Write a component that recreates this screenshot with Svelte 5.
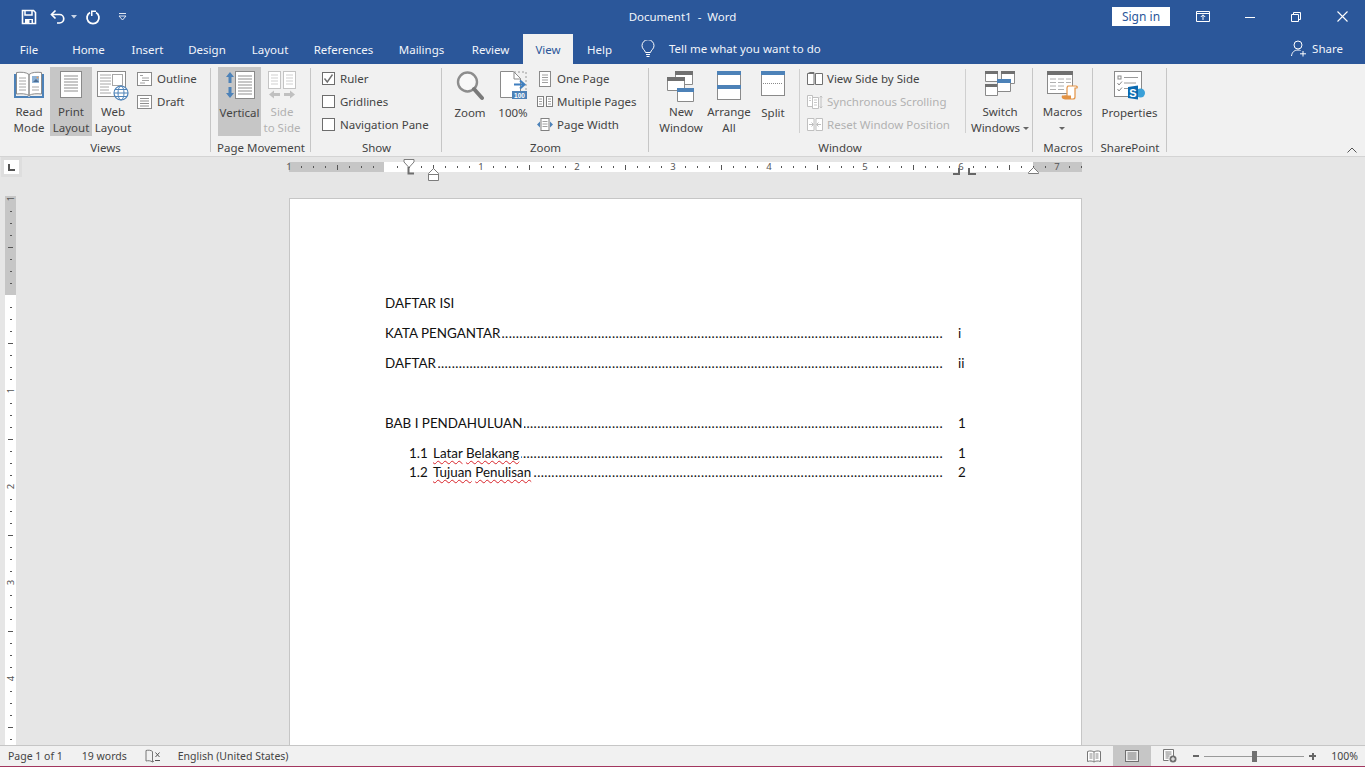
<script>
  const tabs = ["File", "Home", "Insert", "Design", "Layout", "References", "Mailings", "Review", "View", "Help"];

  // horizontal ruler: zero is at 96px from the ruler's left edge, 12px per tick
  const hTicks = [];
  for (let k = -7; k <= 58; k++) {
    if (k % 8 === 0) continue;
    hTicks.push({ x: 96 + k * 12, long: k % 4 === 0 });
  }
  const hNums = [-1, 1, 2, 3, 4, 5, 6, 7].map((n) => ({ x: 96 + n * 96, label: Math.abs(n) }));

  const vTicks = [];
  for (let k = -7; k <= 38; k++) {
    if (k % 8 === 0) continue;
    vTicks.push({ y: 99 + k * 12, long: k % 4 === 0 });
  }
  const vNums = [-1, 1, 2, 3, 4].map((n) => ({ y: 99 + n * 96, label: Math.abs(n) }));

  const dots = ".".repeat(260);
</script>

<div class="word">
  <header class="titlebar">
    <div class="qat">
      <svg width="16" height="16" viewBox="0 0 16 16" class="save"><path d="M1.5 1.5h11l2 2v11h-13z" fill="none" stroke="#fff" stroke-width="1.6"/><path d="M4 2v4h7V2" fill="none" stroke="#fff" stroke-width="1.5"/><path d="M4 15v-5h8v5" fill="#fff"/><rect x="8.5" y="11" width="2" height="3" fill="#2b579a"/></svg>
      <svg width="16" height="16" viewBox="0 0 16 16" class="undo"><path d="M5.5 1.5 1.5 5.5l4 4" fill="none" stroke="#fff" stroke-width="1.7"/><path d="M2 5.5h7.5a4 4 0 0 1 0 8.500H7" fill="none" stroke="#fff" stroke-width="1.7"/></svg>
      <svg width="6" height="4" viewBox="0 0 6 4" class="undo-caret"><path d="M0 0h6L3 3.500z" fill="#c8d4e6"/></svg>
      <svg width="16" height="16" viewBox="0 0 16 16" class="redo"><path d="M5 3.500a6 6 0 1 0 6 0" fill="none" stroke="#fff" stroke-width="1.800"/><path d="M9 .5h5v1.500H10.500V6H9z" fill="#fff" transform="translate(-3 1)"/></svg>
      <svg width="9" height="8" viewBox="0 0 9 8" class="custom"><path d="M1 .5h7" stroke="#dfe6f1" fill="none"/><path d="M1 3h7L4.500 7z" fill="none" stroke="#dfe6f1"/></svg>
    </div>
    <div class="doc-title">Document1 &nbsp;-&nbsp; Word</div>
    <div class="win">
      <button class="signin">Sign in</button>
      <svg width="14" height="11" viewBox="0 0 14 11" class="display"><path d="M.5.5h13v10H.5zM.5 2.500h13" fill="none" stroke="#fff"/><path d="M7 9V4M4.800 6 7 3.800 9.200 6" fill="none" stroke="#fff"/></svg>
      <svg width="10" height="10" viewBox="0 0 10 10" class="ctl"><path d="M0 5.500h10" stroke="#fff"/></svg>
      <svg width="10" height="10" viewBox="0 0 10 10" class="ctl"><path d="M.5 2.500h7v7h-7zM2.500 2.500v-2h7v7h-2" fill="none" stroke="#fff"/></svg>
      <svg width="11" height="11" viewBox="0 0 11 11" class="ctl close"><path d="M.5.5l10 10M10.500.5l-10 10" stroke="#fff" stroke-width="1.100"/></svg>
    </div>
  </header>

  <nav class="tabbar">
    <div class="tabs">
      {#each tabs as t}
        <div class="tab" class:active={t === "View"}>{t}</div>
      {/each}
    </div>
    <div class="tellme">
      <svg width="14" height="18" viewBox="0 0 14 18"><path d="M4.500 12.500C4 10 1 9 1 5.700a6 6 0 0 1 12 0C13 9 10 10 9.500 12.500z" fill="none" stroke="#fff"/><path d="M5 14.500h4M5.500 16.500h3" stroke="#fff"/></svg>
      <span>Tell me what you want to do</span>
    </div>
    <div class="share">
      <svg width="16" height="17" viewBox="0 0 16 17"><circle cx="7" cy="5" r="4" fill="none" stroke="#fff"/><path d="M.5 16c.5-4 3-6 6.500-6 1 0 2 .2 2.500.5M12 11v5.500M9 13.800h6" fill="none" stroke="#fff"/></svg>
      <span>Share</span>
    </div>
  </nav>

  <section class="ribbon">
    <div class="group views">
      <div class="items">
        <div class="big w42">
          <div class="icon">
            <svg width="32" height="28" viewBox="0 0 32 28"><path d="M1 3h2v22h11c1 0 1.500.5 2 1 .5-.5 1-1 2-1h11V3h2v24H1z" fill="#4d82b8"/><path d="M3.500 1.500C8 1 13 1 16 3.500v21c-3-2-8-2-12.500-1.500zM28.500 1.500C24 1 19 1 16 3.500v21c3-2 8-2 12.500-1.500z" fill="#fff" stroke="#8a8a8a"/><path d="M6 7h7M6 10h7M6 13h7M6 16h7M6 19h7M19 16h7M19 19h7" stroke="#a6a6a6"/><rect x="19" y="5" width="7" height="7" fill="#8fb3d6"/><path d="M20 11l3-3 3 3z" fill="#4d6f96"/><circle cx="24.500" cy="6.500" r="1" fill="#e8a060"/></svg>
          </div>
          <span>Read<br />Mode</span>
        </div>
        <div class="big w42 on">
          <div class="icon">
            <svg width="22" height="27" viewBox="0 0 22 27"><rect x=".5" y=".5" width="21" height="26" fill="#fff" stroke="#8a8a8a"/><path d="M4 5h14M4 8h14M4 11h14M4 14h14M4 17h14M4 20h14" stroke="#8f8f8f"/></svg>
          </div>
          <span>Print<br />Layout</span>
        </div>
        <div class="big w42">
          <div class="icon">
            <svg width="32" height="30" viewBox="0 0 32 30"><rect x=".5" y=".5" width="28" height="25" fill="#fff" stroke="#8a8a8a"/><path d="M3 4h11M3 7h11M3 10h11M3 13h11M3 16h9M3 19h9M3 22h11" stroke="#a6a6a6"/><rect x="15.500" y="3.500" width="10" height="11" fill="#fff" stroke="#a6a6a6"/><circle cx="24" cy="22" r="7" fill="#fff" stroke="#4d82b8" stroke-width="1.200"/><ellipse cx="24" cy="22" rx="3" ry="7" fill="none" stroke="#4d82b8"/><path d="M17 22h14M18 18.500h12M18 25.500h12" stroke="#4d82b8"/></svg>
          </div>
          <span>Web<br />Layout</span>
        </div>
        <div class="smalls">
          <div class="small">
            <svg width="15" height="14" viewBox="0 0 15 14"><rect x=".5" y=".5" width="14" height="13" fill="#fff" stroke="#8a8a8a"/><path d="M3 3.500h3M5 6h7M5 8.500h7M3 11h5" stroke="#a0a0a0"/></svg>
            <span>Outline</span>
          </div>
          <div class="small">
            <svg width="15" height="14" viewBox="0 0 15 14"><rect x=".5" y=".5" width="14" height="13" fill="#fff" stroke="#8a8a8a"/><path d="M3 3.500h9M3 6h9M3 8.500h9M3 11h9" stroke="#8f8f8f"/></svg>
            <span>Draft</span>
          </div>
        </div>
      </div>
      <div class="glabel">Views</div>
    </div>

    <div class="group movement">
      <div class="items">
        <div class="big w43 on">
          <div class="icon">
            <svg width="30" height="28" viewBox="0 0 30 28"><path d="M5 1l4 5H6.500v6h-3V6H1zM5 27l4-5H6.500v-6h-3v6H1z" fill="#4d82b8"/><rect x="10.500" y=".5" width="19" height="27" fill="#fff" stroke="#8a8a8a"/><path d="M13 5h14M13 8h14M13 11h14M13 14h14M13 17h14M13 20h14M13 23h14" stroke="#8f8f8f"/></svg>
          </div>
          <span>Vertical</span>
        </div>
        <div class="big w42 dis">
          <div class="icon">
            <svg width="28" height="28" viewBox="0 0 28 28"><rect x=".5" y=".5" width="12" height="17" fill="#fff" stroke="#c4c4c4"/><rect x="15.500" y=".5" width="12" height="17" fill="#fff" stroke="#c4c4c4"/><path d="M3 4h7M3 7h7M3 10h7M3 13h7M18 4h7M18 7h7M18 10h7M18 13h7" stroke="#cfcfcf"/><path d="M1 23.500l5-4v2.500h6v3H6v2.500zM27 23.500l-5-4v2.500h-6v3h6v2.500z" fill="#c0c0c0"/></svg>
          </div>
          <span>Side<br />to Side</span>
        </div>
      </div>
      <div class="glabel">Page Movement</div>
    </div>

    <div class="group show">
      <div class="items">
        <div class="smalls">
          <div class="small">
            <span class="check"><svg width="11" height="11" viewBox="0 0 11 11"><path d="M1.500 5.500 4.300 9 9.500 1.500" fill="none" stroke="#707070" stroke-width="1.400"/></svg></span>
            <span>Ruler</span>
          </div>
          <div class="small"><span class="check"></span><span>Gridlines</span></div>
          <div class="small"><span class="check"></span><span>Navigation Pane</span></div>
        </div>
      </div>
      <div class="glabel">Show</div>
    </div>

    <div class="group zoom">
      <div class="items">
        <div class="big w42">
          <div class="icon">
            <svg width="28" height="30" viewBox="0 0 28 30"><circle cx="11.500" cy="11" r="9.500" fill="#fff" fill-opacity=".5" stroke="#8d8d8d" stroke-width="2.400"/><path d="M18 18l8 9" stroke="#7a7a7a" stroke-width="4" stroke-linecap="round"/></svg>
          </div>
          <span>Zoom</span>
        </div>
        <div class="big w44">
          <div class="icon">
            <svg width="27" height="28" viewBox="0 0 27 28"><path d="M.5.500h13l7 7v19H.500z" fill="#fff" stroke="#8a8a8a"/><path d="M14 1h12v24" fill="none" stroke="#9a9a9a" stroke-dasharray="2 2"/><path d="M14 1v7h7" fill="none" stroke="#8a8a8a"/><path d="M14 13.500h10M20 9.500l4.500 4-4.500 4" fill="none" stroke="#3f7fbf" stroke-width="2"/><rect x="12" y="20" width="15" height="8" fill="#4d82b8"/><text x="19.500" y="26.800" class="badge">100</text></svg>
          </div>
          <span>100%</span>
        </div>
        <div class="smalls">
          <div class="small">
            <svg width="16" height="16" viewBox="0 0 16 16"><rect x="2.500" y=".5" width="11" height="15" fill="#fff" stroke="#8a8a8a"/><path d="M5 4h6M5 6.500h6M5 9h6M5 11.500h6" stroke="#a0a0a0"/></svg>
            <span>One Page</span>
          </div>
          <div class="small">
            <svg width="16" height="11" viewBox="0 0 16 11"><rect x=".5" y=".5" width="6" height="10" fill="#fff" stroke="#808080"/><rect x="9.500" y=".5" width="6" height="10" fill="#fff" stroke="#808080"/><path d="M2 3h3M2 5.500h3M2 8h3M11 3h3M11 5.500h3M11 8h3" stroke="#a0a0a0"/></svg>
            <span>Multiple Pages</span>
          </div>
          <div class="small">
            <svg width="16" height="13" viewBox="0 0 16 13"><path d="M0 6.500l3-3v6zM16 6.500l-3-3v6z" fill="#4d82b8"/><rect x="4" y=".5" width="8" height="12" fill="#fff" stroke="#808080"/><path d="M5.500 3.500h5M5.500 6h5M5.500 8.500h5" stroke="#a0a0a0"/></svg>
            <span>Page Width</span>
          </div>
        </div>
      </div>
      <div class="glabel">Zoom</div>
    </div>

    <div class="group window">
      <div class="items">
        <div class="big w48">
          <div class="icon">
            <svg width="28" height="31" viewBox="0 0 28 31"><path d="M8.500.5h17v13h-17z" fill="#fff" stroke="#8a8a8a"/><rect x="8" y="0" width="18" height="4" fill="#707070"/><path d="M.5 6.500h17v13H.500z" fill="#fff" stroke="#8a8a8a"/><rect x="0" y="6" width="18" height="4" fill="#707070"/><path d="M10.500 17.500h16v13h-16z" fill="#fff" stroke="#8a8a8a"/><rect x="10" y="17" width="17" height="4" fill="#4d82b8"/></svg>
          </div>
          <span>New<br />Window</span>
        </div>
        <div class="big w48">
          <div class="icon">
            <svg width="24" height="29" viewBox="0 0 24 29"><rect x=".5" y=".5" width="23" height="28" fill="#fff" stroke="#8a8a8a"/><rect x="0" y="0" width="24" height="4" fill="#4d82b8"/><rect x="0" y="14" width="24" height="4" fill="#4d82b8"/></svg>
          </div>
          <span>Arrange<br />All</span>
        </div>
        <div class="big w40">
          <div class="icon">
            <svg width="24" height="25" viewBox="0 0 24 25"><rect x=".5" y=".5" width="23" height="24" fill="#fff" stroke="#8a8a8a"/><rect x="0" y="0" width="24" height="4" fill="#4d82b8"/><path d="M2 12.500h20" stroke="#8a8a8a" stroke-dasharray="1 1"/></svg>
          </div>
          <span>Split</span>
        </div>
        <div class="vsep first"></div>
        <div class="smalls sync">
          <div class="small">
            <svg width="16" height="13" viewBox="0 0 16 13"><path d="M.5 1.500h6.500v11H.500zM8.500 1.500H15.500v11H8.500z" fill="#fff" stroke="#707070"/><path d="M7 1.500V.5M1 1.500l2-1h4" fill="none" stroke="#707070"/></svg>
            <span>View Side by Side</span>
          </div>
          <div class="small dis">
            <svg width="16" height="14" viewBox="0 0 16 14"><path d="M.5.500h5v11h-5zM5.500 2.500h6v11h-6z" fill="#fff" stroke="#c0c0c0"/><path d="M7 5h3M7 7.500h3M7 10h3M2 3h2M2 5.500h2" stroke="#c8c8c8"/><path d="M14 1v12M12.800 2.500 14 1l1.200 1.500M12.800 11.500 14 13l1.200-1.500" fill="none" stroke="#c0c0c0"/></svg>
            <span>Synchronous Scrolling</span>
          </div>
          <div class="small dis">
            <svg width="16" height="13" viewBox="0 0 16 13"><path d="M.5.500h6.500v12H.500zM9 .5h6.500v12H9z" fill="#fff" stroke="#c0c0c0"/><path d="M2 6.500h4M4.500 4.500l2 2-2 2M14 6.500h-4M11.500 4.500l-2 2 2 2" fill="none" stroke="#bdbdbd"/></svg>
            <span>Reset Window Position</span>
          </div>
        </div>
        <div class="vsep second"></div>
        <div class="big w62">
          <div class="icon">
            <svg width="30" height="26" viewBox="0 0 30 26"><path d="M.5.500h12v10H.500zM16.500.500h13v12h-13zM.5 13.500h12v11H.500z" fill="#fff" stroke="#8a8a8a"/><rect y="0" width="13" height="3" fill="#707070"/><rect x="16" y="0" width="14" height="3" fill="#707070"/><rect y="13" width="13" height="3" fill="#707070"/><path d="M12.500 8.500h13v12h-13z" fill="#fff" stroke="#8a8a8a"/><rect x="12" y="8" width="14" height="4" fill="#4d82b8"/></svg>
          </div>
          <span>Switch<br />Windows<i class="caret"></i></span>
        </div>
      </div>
      <div class="glabel glabel-window">Window</div>
    </div>

    <div class="group macros">
      <div class="items">
        <div class="big w59">
          <div class="icon">
            <svg width="31" height="29" viewBox="0 0 31 29"><rect x=".5" y=".5" width="25" height="22" fill="#fff" stroke="#8a8a8a"/><rect width="26" height="4" fill="#707070"/><path d="M3 8h6M11 8h6M19 8h5M3 11.500h6M11 11.500h6M19 11.500h5M3 15h6M11 15h6M3 18.500h6M11 18.500h6" stroke="#b0b0b0"/><path d="M21 15h8c1 0 1.500 1 1 2h-2v9c0 1-1 2-2 2h-8c-2 0-2-3 0-3h2v-8c0-1 1-2 1-2z" fill="#fff" stroke="#e39243" stroke-width="1.200"/><path d="M15 24.500h9v3.500h-7c-2 0-3-2-2-3.500z" fill="#e39243"/></svg>
          </div>
          <span>Macros<br /><i class="caret solo"></i></span>
        </div>
      </div>
      <div class="glabel">Macros</div>
    </div>

    <div class="group sharepoint">
      <div class="items">
        <div class="big w73">
          <div class="icon">
            <svg width="31" height="32" viewBox="0 0 31 32"><rect x=".5" y=".5" width="27" height="25" fill="#fff" stroke="#8a8a8a"/><rect x="4" y="5" width="3" height="3" fill="none" stroke="#8a8a8a"/><path d="M10 6.500h14M10 12h12M10 17.500h7" stroke="#9a9a9a"/><path d="M3.500 12l1.500 2 3-3.500M3.500 18l1.500 2 3-3.500" fill="none" stroke="#8a8a8a"/><circle cx="26.500" cy="22" r="4.500" fill="#3aa0d8"/><path d="M14 16l10-1.500v14L14 27z" fill="#0b6ab0"/><text x="19" y="25.500" class="sp">S</text></svg>
          </div>
          <span>Properties</span>
        </div>
      </div>
      <div class="glabel">SharePoint</div>
    </div>

    <svg class="collapse" width="10" height="6" viewBox="0 0 10 6"><path d="M.5 5.500 5 1l4.500 4.500" fill="none" stroke="#555"/></svg>
  </section>

  <main class="workspace">
    <div class="corner">
      <div class="tabsel"><svg width="7" height="7" viewBox="0 0 7 7"><path d="M1 0v6h6" fill="none" stroke="#555" stroke-width="2"/></svg></div>
    </div>

    <div class="hruler">
      <div class="margin left"></div>
      <div class="margin right"></div>
      {#each hTicks as t}
        <i class="htick" class:long={t.long} style="left:{t.x}px"></i>
      {/each}
      {#each hNums as n}
        <b class="hnum" style="left:{n.x}px">{n.label}</b>
      {/each}
      <svg class="indent first" width="13" height="16" viewBox="0 0 13 16"><path d="M1 .5h10v2.500L6 8.500 1 3z" fill="#fff" stroke="#7c7c7c"/><path d="M5.500 8v6.500H11" fill="none" stroke="#6e6e6e" stroke-width="2"/></svg>
      <svg class="indent hang" width="11" height="13" viewBox="0 0 11 13"><path d="M5.500.5l5 5v7H.500v-7z" fill="#fff" stroke="#7c7c7c"/><path d="M.5 6.500h10" stroke="#7c7c7c"/></svg>
      <svg class="indent rt" width="11" height="7" viewBox="0 0 11 7"><path d="M5.500.5l5 5v1H.500v-1z" fill="#fff" stroke="#7c7c7c"/></svg>
      <svg class="indent tab6" width="8" height="7" viewBox="0 0 8 7"><path d="M6 0v6H0" fill="none" stroke="#666" stroke-width="2"/></svg>
      <svg class="indent tab7" width="8" height="7" viewBox="0 0 8 7"><path d="M1 0v6h7" fill="none" stroke="#666" stroke-width="2"/></svg>
    </div>

    <div class="rightfill"></div>

    <div class="vruler">
      <div class="vmargin"></div>
      {#each vTicks as t}
        <i class="vtick" class:long={t.long} style="top:{t.y}px"></i>
      {/each}
      {#each vNums as n}
        <b class="vnum" style="top:{n.y}px">{n.label}</b>
      {/each}
    </div>

    <article class="page">
      <p class="plain">DAFTAR ISI</p>
      <p class="toc gap"><span>KATA PENGANTAR</span><span class="dots">{dots}</span><span class="num">i</span></p>
      <p class="toc gap"><span>DAFTAR</span><span class="dots">{dots}</span><span class="num">ii</span></p>
      <p class="toc bab"><span>BAB I PENDAHULUAN</span><span class="dots">{dots}</span><span class="num">1</span></p>
      <p class="toc sub gap"><span class="n">1.1</span><span><u>Latar</u> <u>Belakang</u></span><span class="dots">{dots}</span><span class="num">1</span></p>
      <p class="toc sub"><span class="n">1.2</span><span><u>Tujuan</u> <u>Penulisan</u></span><span class="dots">{dots}</span><span class="num">2</span></p>
    </article>
  </main>

  <footer class="status">
    <span class="st page-count">Page 1 of 1</span>
    <span class="st words">19 words</span>
    <svg class="proof" width="16" height="14" viewBox="0 0 16 14"><path d="M7.500 2.500C6 1 3 1 1 1.500V12c2-.5 4.500-.5 6.500 1 .5-.4 1-.7 1.500-.9M7.500 2.500V13" fill="none" stroke="#777"/><path d="M10.500 3.500l4 4.500M14.500 3.500l-4 4.500M10 11.500h5" fill="none" stroke="#555"/></svg>
    <span class="st lang">English (United States)</span>
    <div class="st-right">
      <div class="view">
        <svg width="14" height="13" viewBox="0 0 14 13"><path d="M.5 1.500C3 .5 5.500 1 7 2c1.500-1 4-1.500 6.500-.5v10C11 10.500 8.500 11 7 12c-1.500-1-4-1.500-6.500-.5z" fill="#fff" stroke="#777"/><path d="M7 2v10M2.500 4h3M2.500 6h3M2.500 8h3M8.500 4h3M8.500 6h3M8.500 8h3" stroke="#888"/></svg>
      </div>
      <div class="view on">
        <svg width="14" height="12" viewBox="0 0 14 12"><rect x=".5" y=".5" width="13" height="11" fill="#ececec" stroke="#6f6f6f"/><path d="M2.500 3h9M2.500 5h9M2.500 7h9M2.500 9h9" stroke="#777"/></svg>
      </div>
      <div class="view">
        <svg width="14" height="14" viewBox="0 0 14 14"><path d="M.5.500h10V7M.5.500v11h5" fill="#fff" stroke="#777"/><path d="M2.500 3h6M2.500 5h6M2.500 7h4M2.500 9h3" stroke="#888"/><circle cx="10" cy="10" r="3.500" fill="#6f6f6f"/><path d="M8 10h4M10 8v4" stroke="#fff"/></svg>
      </div>
      <div class="slider">
        <i class="minus"></i>
        <div class="track"><i class="thumb"></i></div>
        <i class="plus"></i>
      </div>
      <span class="st pct">100%</span>
    </div>
  </footer>
</div>

<style>
  :global(body) {
    margin: 0;
    overflow: hidden;
  }

  .word {
    height: 100vh;
    display: flex;
    flex-direction: column;
    overflow: hidden;
    font-family: "Noto Sans", "Open Sans", sans-serif;
    font-size: 11.5px;
    color: #444;
    background: #e6e6e6;
  }

  /* title bar */
  .titlebar {
    height: 33px;
    flex: none;
    background: #2b579a;
    color: #fff;
    display: grid;
    grid-template-columns: 1fr auto 1fr;
    align-items: center;
  }
  .qat {
    display: flex;
    align-items: center;
    padding-left: 21px;
  }
  .qat svg {
    flex: none;
  }
  .undo {
    margin-left: 13px;
  }
  .undo-caret {
    margin-left: 5px;
  }
  .redo {
    margin-left: 8px;
  }
  .custom {
    margin-left: 17px;
  }
  .doc-title {
    font-size: 11.5px;
    color: #f2f5fa;
  }
  .win {
    display: flex;
    align-items: center;
    justify-content: flex-end;
    padding-right: 17px;
  }
  .signin {
    width: 58px;
    height: 19px;
    padding: 0;
    border: 0;
    background: #fff;
    color: #2b579a;
    font: inherit;
    font-size: 12px;
    margin-right: 26px;
  }
  .display {
    margin-right: 35px;
  }
  .ctl {
    margin-right: 36px;
  }
  .close {
    margin-right: 0;
  }

  /* tab row */
  .tabbar {
    height: 31px;
    flex: none;
    background: #2b579a;
    color: #f2f5fa;
    display: flex;
    align-items: stretch;
  }
  .tabs {
    display: grid;
    grid-template-columns: 58px 61px 57px 62px 64px 83px 73px 65px 50px 53px;
  }
  .tab {
    display: flex;
    align-items: center;
    justify-content: center;
    margin-top: 1px;
  }
  .tab.active {
    background: #f1f1f1;
    color: #2b579a;
  }
  .tellme {
    display: flex;
    align-items: center;
    gap: 14px;
    margin-left: 15px;
  }
  .share {
    margin-left: auto;
    display: flex;
    align-items: center;
    gap: 5px;
    padding-right: 22px;
  }

  /* ribbon */
  .ribbon {
    height: 92px;
    flex: none;
    box-sizing: content-box;
    background: #f1f1f1;
    border-bottom: 1px solid #d4d4d4;
    display: flex;
    position: relative;
    line-height: 16px;
  }
  .group {
    position: relative;
    flex: none;
    display: flex;
    flex-direction: column;
    padding-top: 3px;
    box-sizing: border-box;
  }
  .group::after {
    content: "";
    position: absolute;
    right: 0;
    top: 4px;
    bottom: 4px;
    width: 1px;
    background: #c6c6c6;
  }
  .items {
    height: 69px;
    display: flex;
    flex: none;
  }
  .glabel {
    text-align: center;
    margin-top: 4px;
    font-size: 11.5px;
  }
  .glabel-window {
    padding-right: 2px;
  }

  .views {
    width: 211px;
    padding-left: 8px;
  }
  .views .glabel {
    margin-left: -8px;
    padding-right: 0;
  }
  .movement {
    width: 100px;
    padding-left: 7px;
  }
  .movement .glabel {
    margin-left: -7px;
  }
  .show {
    width: 131px;
    padding-left: 11px;
  }
  .show .glabel {
    margin-left: -11px;
  }
  .zoom {
    width: 207px;
    padding-left: 7px;
  }
  .zoom .glabel {
    margin-left: -7px;
  }
  .window {
    width: 384px;
    padding-left: 8px;
  }
  .window .glabel {
    margin-left: -8px;
  }
  .macros {
    width: 60px;
  }
  .sharepoint {
    width: 74px;
  }

  .big {
    flex: none;
    display: flex;
    flex-direction: column;
    align-items: center;
    text-align: center;
    white-space: nowrap;
  }
  .big > span {
    display: block;
  }
  .icon {
    height: 38px;
    padding-top: 4px;
    box-sizing: border-box;
    display: flex;
    align-items: flex-start;
    justify-content: center;
  }
  .w40 {
    width: 40px;
  }
  .w42 {
    width: 42px;
  }
  .w43 {
    width: 43px;
  }
  .w44 {
    width: 44px;
  }
  .w48 {
    width: 48px;
  }
  .w59 {
    width: 59px;
  }
  .w62 {
    width: 62px;
  }
  .w73 {
    width: 73px;
  }
  .on {
    background: #c6c6c6;
  }
  .dis {
    color: #b1b1b1;
  }

  .smalls {
    display: flex;
    flex-direction: column;
    padding-top: 0;
    margin-left: 3px;
  }
  .small {
    height: 23px;
    display: flex;
    align-items: center;
    gap: 4px;
    white-space: nowrap;
  }
  .small svg {
    flex: none;
  }
  .views .small {
    gap: 5px;
    margin-top: 0;
  }
  .show .smalls {
    margin-left: 0;
  }
  .show .small {
    gap: 5px;
  }
  .check {
    width: 13px;
    height: 13px;
    box-sizing: border-box;
    border: 1px solid #6d6d6d;
    background: #fff;
    display: flex;
    align-items: center;
    justify-content: center;
  }
  .zoom .smalls {
    margin-left: 2px;
  }
  .zoom .small svg {
    width: 16px;
  }
  .vsep {
    flex: none;
    width: 1px;
    height: 64px;
    margin-top: 2px;
    background: #d0d0d0;
  }
  .vsep.first {
    margin-left: 6px;
  }
  .vsep.second {
    margin-left: 8px;
    margin-right: 3px;
  }
  .sync {
    margin-left: 7px;
    width: 150px;
  }
  .caret {
    display: inline-block;
    width: 0;
    height: 0;
    margin-left: 3px;
    vertical-align: 2px;
    border: 3px solid transparent;
    border-top-color: #666;
    border-bottom: 0;
  }
  .caret.solo {
    margin-left: 0;
  }
  .badge {
    font: 700 6.500px "Liberation Sans", sans-serif;
    fill: #fff;
    text-anchor: middle;
  }
  .sp {
    font: 700 11px "Liberation Sans", sans-serif;
    fill: #fff;
    text-anchor: middle;
  }
  .collapse {
    position: absolute;
    right: 8px;
    bottom: 3px;
  }

  /* document area */
  .workspace {
    flex: 1;
    min-height: 0;
    display: grid;
    grid-template-columns: 289px 794px 1fr;
    grid-template-rows: 39px 1fr;
    overflow: hidden;
  }
  .corner {
    padding: 3px 0 0 4px;
  }
  .tabsel {
    width: 15px;
    height: 14px;
    background: #fff;
    outline: 3px solid #dedede;
    display: flex;
    align-items: center;
    justify-content: center;
  }
  .hruler {
    position: relative;
    height: 10px;
    margin-top: 5px;
    background: #fff;
    width: 793px;
  }
  .margin {
    position: absolute;
    top: 0;
    bottom: 0;
    background: #c6c6c6;
  }
  .margin.left {
    left: 0;
    width: 95px;
  }
  .margin.right {
    right: 0;
    width: 49px;
  }
  .htick {
    position: absolute;
    top: 4px;
    width: 1px;
    height: 2px;
    background: #555;
  }
  .htick.long {
    top: 3px;
    height: 5px;
  }
  .hnum {
    position: absolute;
    top: -1px;
    width: 10px;
    margin-left: -5px;
    text-align: center;
    font-weight: 400;
    font-size: 9.500px;
    line-height: 12px;
    color: #555;
  }
  .indent {
    position: absolute;
  }
  .indent.first {
    left: 114px;
    top: -3px;
  }
  .indent.hang {
    left: 139px;
    top: 6px;
  }
  .indent.rt {
    left: 739px;
    top: 5px;
  }
  .indent.tab6 {
    left: 664px;
    top: 6px;
  }
  .indent.tab7 {
    left: 679px;
    top: 6px;
  }

  .vruler {
    position: relative;
    width: 11px;
    margin-left: 5px;
    background: #fff;
    overflow: hidden;
  }
  .vmargin {
    position: absolute;
    top: 0;
    left: 0;
    right: 0;
    height: 99px;
    background: #c6c6c6;
  }
  .vtick {
    position: absolute;
    left: 5px;
    width: 2px;
    height: 1px;
    background: #555;
  }
  .vtick.long {
    left: 3px;
    width: 5px;
  }
  .vnum {
    position: absolute;
    left: 0;
    width: 11px;
    height: 11px;
    margin-top: -6px;
    text-align: center;
    font-weight: 400;
    font-size: 9.500px;
    line-height: 11px;
    color: #555;
    transform: rotate(-90deg);
  }

  .page {
    margin-top: 2px;
    width: 793px;
    box-sizing: border-box;
    background: #fff;
    border: 1px solid #c6c6c6;
    border-bottom: 0;
    padding: 95px 102px 0 95px;
    font-family: Lato, "Noto Sans", sans-serif;
    font-size: 13.400px;
    line-height: 19px;
    color: #111;
  }
  .page p {
    margin: 0;
  }
  .toc {
    display: flex;
    white-space: nowrap;
  }
  .gap {
    margin-top: 11px !important;
  }
  .bab {
    margin-top: 41px !important;
  }
  .sub {
    padding-left: 24px;
  }
  .n {
    width: 24px;
    flex: none;
  }
  .dots {
    flex: 1;
    min-width: 0;
    overflow: hidden;
    margin-left: 2px;
    direction: rtl;
    letter-spacing: 0.4px;
  }
  .num {
    flex: none;
    width: 21px;
    margin-left: 15px;
  }
  u {
    text-decoration: underline wavy #d8232a;
    text-decoration-thickness: 1px;
    text-underline-offset: 2px;
  }

  /* status bar */
  .status {
    height: 22px;
    flex: none;
    box-sizing: border-box;
    background: #f1f1f1;
    border-top: 1px solid #c6c6c6;
    border-bottom: 1px solid #a2365f;
    display: flex;
    align-items: center;
    font-size: 10.500px;
    color: #444;
  }
  .page-count {
    margin-left: 8px;
  }
  .words {
    margin-left: 19px;
  }
  .proof {
    margin-left: 18px;
  }
  .lang {
    margin-left: 17px;
  }
  .st-right {
    margin-left: auto;
    height: 100%;
    display: flex;
    align-items: center;
    padding-right: 7px;
  }
  .view {
    width: 38px;
    height: 100%;
    display: flex;
    align-items: center;
    justify-content: center;
  }
  .slider {
    display: flex;
    align-items: center;
    margin: 0 15px 0 4px;
    gap: 5px;
  }
  .minus {
    width: 6px;
    height: 2px;
    background: #666;
  }
  .plus {
    position: relative;
    width: 7px;
    height: 7px;
    background: linear-gradient(#666, #666) center / 7px 2px no-repeat,
      linear-gradient(#666, #666) center / 2px 7px no-repeat;
  }
  .track {
    position: relative;
    width: 100px;
    height: 1px;
    background: #9a9a9a;
  }
  .thumb {
    position: absolute;
    left: 48px;
    top: -5px;
    width: 5px;
    height: 11px;
    background: #707070;
  }
</style>
